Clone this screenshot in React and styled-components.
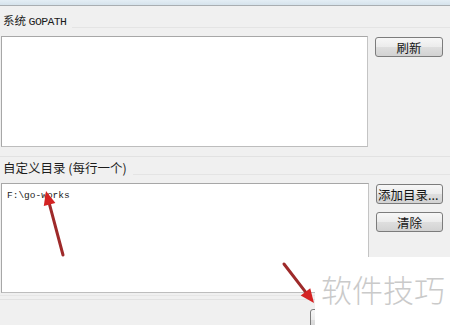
import React from 'react'
import styled, { createGlobalStyle } from 'styled-components'

const Global = createGlobalStyle`
  html, body { margin: 0; padding: 0; background: #f0f0f0; }
  * { box-sizing: border-box; }
`

const CJK = `"Noto Sans CJK SC", "Liberation Sans", sans-serif`

const Win = styled.div`
  position: relative;
  width: 450px;
  height: 325px;
  overflow: hidden;
  background: #f0f0f0;
  font-family: ${CJK};
  color: #1c1c1c;
`
const TopStrip = styled.div`
  height: 6px;
  background: linear-gradient(#e4eef5, #d6e3ec);
  border-bottom: 1px solid #a9aeb2;
`
const Header = styled.div`
  display: flex;
  align-items: center;
  height: ${p => p.$h}px;
  padding: ${p => p.$pt || 0}px 0 ${p => p.$pb || 0}px 3px;
  gap: 6px;
  &::after {
    content: '';
    flex: 1;
    border-top: 1px solid #e4e4e4;
    margin-top: 12px;
  }
`
const Label = styled.span`
  font-size: ${p => p.$size || 12}px;
  line-height: 1;
  white-space: nowrap;
`
const Mono = styled.span`
  font-family: "Liberation Mono", monospace;
  font-size: 11.5px;
  letter-spacing: -0.6px;
`
const Rule = styled.div`
  height: 1px;
  margin-top: ${p => p.$mt}px;
  background: #e2e2e2;
`
const Body = styled.div`
  display: flex;
  align-items: flex-start;
  padding-left: 1px;
  height: ${p => p.$h}px;
`
const TextBox = styled.div`
  width: ${p => p.$w}px;
  height: 100%;
  background: #fff;
  border: 1px solid #a7a7a7;
  border-right-color: #c4c4c4;
  border-bottom-color: #bdbdbd;
  padding: 6px 5px;
  font-family: "Liberation Mono", monospace;
  font-size: 9.5px;
  color: #222;
`
const ButtonCol = styled.div`
  display: flex;
  flex-direction: column;
  gap: 8px;
  margin-left: 7px;
  padding-top: 1px;
`
const Button = styled.div`
  width: ${p => p.$w || 68}px;
  height: ${p => p.$h || 20}px;
  border: 1px solid #7c7c7c;
  border-radius: 3px;
  background: linear-gradient(#f7f7f7 0%, #ececec 48%, #dedede 52%, #d2d2d2 100%);
  display: flex;
  align-items: center;
  justify-content: ${p => (p.$left ? 'flex-start' : 'center')};
  padding-left: ${p => (p.$left ? 1 : 0)}px;
  font-size: 12.5px;
  white-space: nowrap;
  overflow: hidden;
  color: #151515;
`
const Footer = styled.div`
  margin-top: 2px;
  border-top: 1px solid #e6e6e6;
  padding-top: 3px;
`
const FooterLine = styled.div`
  height: 1px;
  background: #e2e2e2;
`
const FooterRow = styled.div`
  display: flex;
  padding: 9px 0 0 310px;
`
const Watermark = styled.div`
  position: absolute;
  left: 315px;
  top: 257px;
  right: 0;
  bottom: 0;
  background: #fff;
  display: flex;
  align-items: center;
  padding: 0 0 6px 6px;
  font-size: 31px;
  font-weight: 300;
  color: #cacaca;
  font-family: ${CJK};
`
const Arrows = styled.svg`
  position: absolute;
  left: 0;
  top: 0;
  pointer-events: none;
`

const Arrow = ({ x1, y1, x2, y2 }) => {
  const a = Math.atan2(y2 - y1, x2 - x1)
  const L = 14, W = 6
  const bx = x2 - L * Math.cos(a), by = y2 - L * Math.sin(a)
  const px = -Math.sin(a) * W, py = Math.cos(a) * W
  return (
    <g>
      <line x1={x1} y1={y1} x2={bx} y2={by} stroke="#9e2a2a" strokeWidth="3" strokeLinecap="round" />
      <polygon points={`${x2},${y2} ${bx + px},${by + py} ${bx - px},${by - py}`} fill="#d42222" />
    </g>
  )
}

export default function App() {
  return (
    <Win>
      <Global />
      <TopStrip />
      <Header $h={30} $pt={1}>
        <Label $size={11.5}>系统 <Mono>GOPATH</Mono></Label>
      </Header>
      <Body $h={111}>
        <TextBox $w={367} />
        <ButtonCol>
          <Button>刷新</Button>
        </ButtonCol>
      </Body>
      <Rule $mt={9} />
      <Header $h={26} $pb={4}>
        <Label $size={12.5}>自定义目录 (每行一个)</Label>
      </Header>
      <Body $h={110}>
        <TextBox $w={368}>F:\go-works</TextBox>
        <ButtonCol>
          <Button $w={67} $left>添加目录...</Button>
          <Button $w={67}>清除</Button>
        </ButtonCol>
      </Body>
      <Footer>
        <FooterLine />
        <FooterRow>
          <Button $w={80} $h={22} />
        </FooterRow>
      </Footer>
      <Watermark>软件技巧</Watermark>
      <Arrows width="450" height="325">
        <Arrow x1={63} y1={255} x2={46} y2={191} />
        <Arrow x1={284} y1={264} x2={314} y2={303} />
      </Arrows>
    </Win>
  )
}
